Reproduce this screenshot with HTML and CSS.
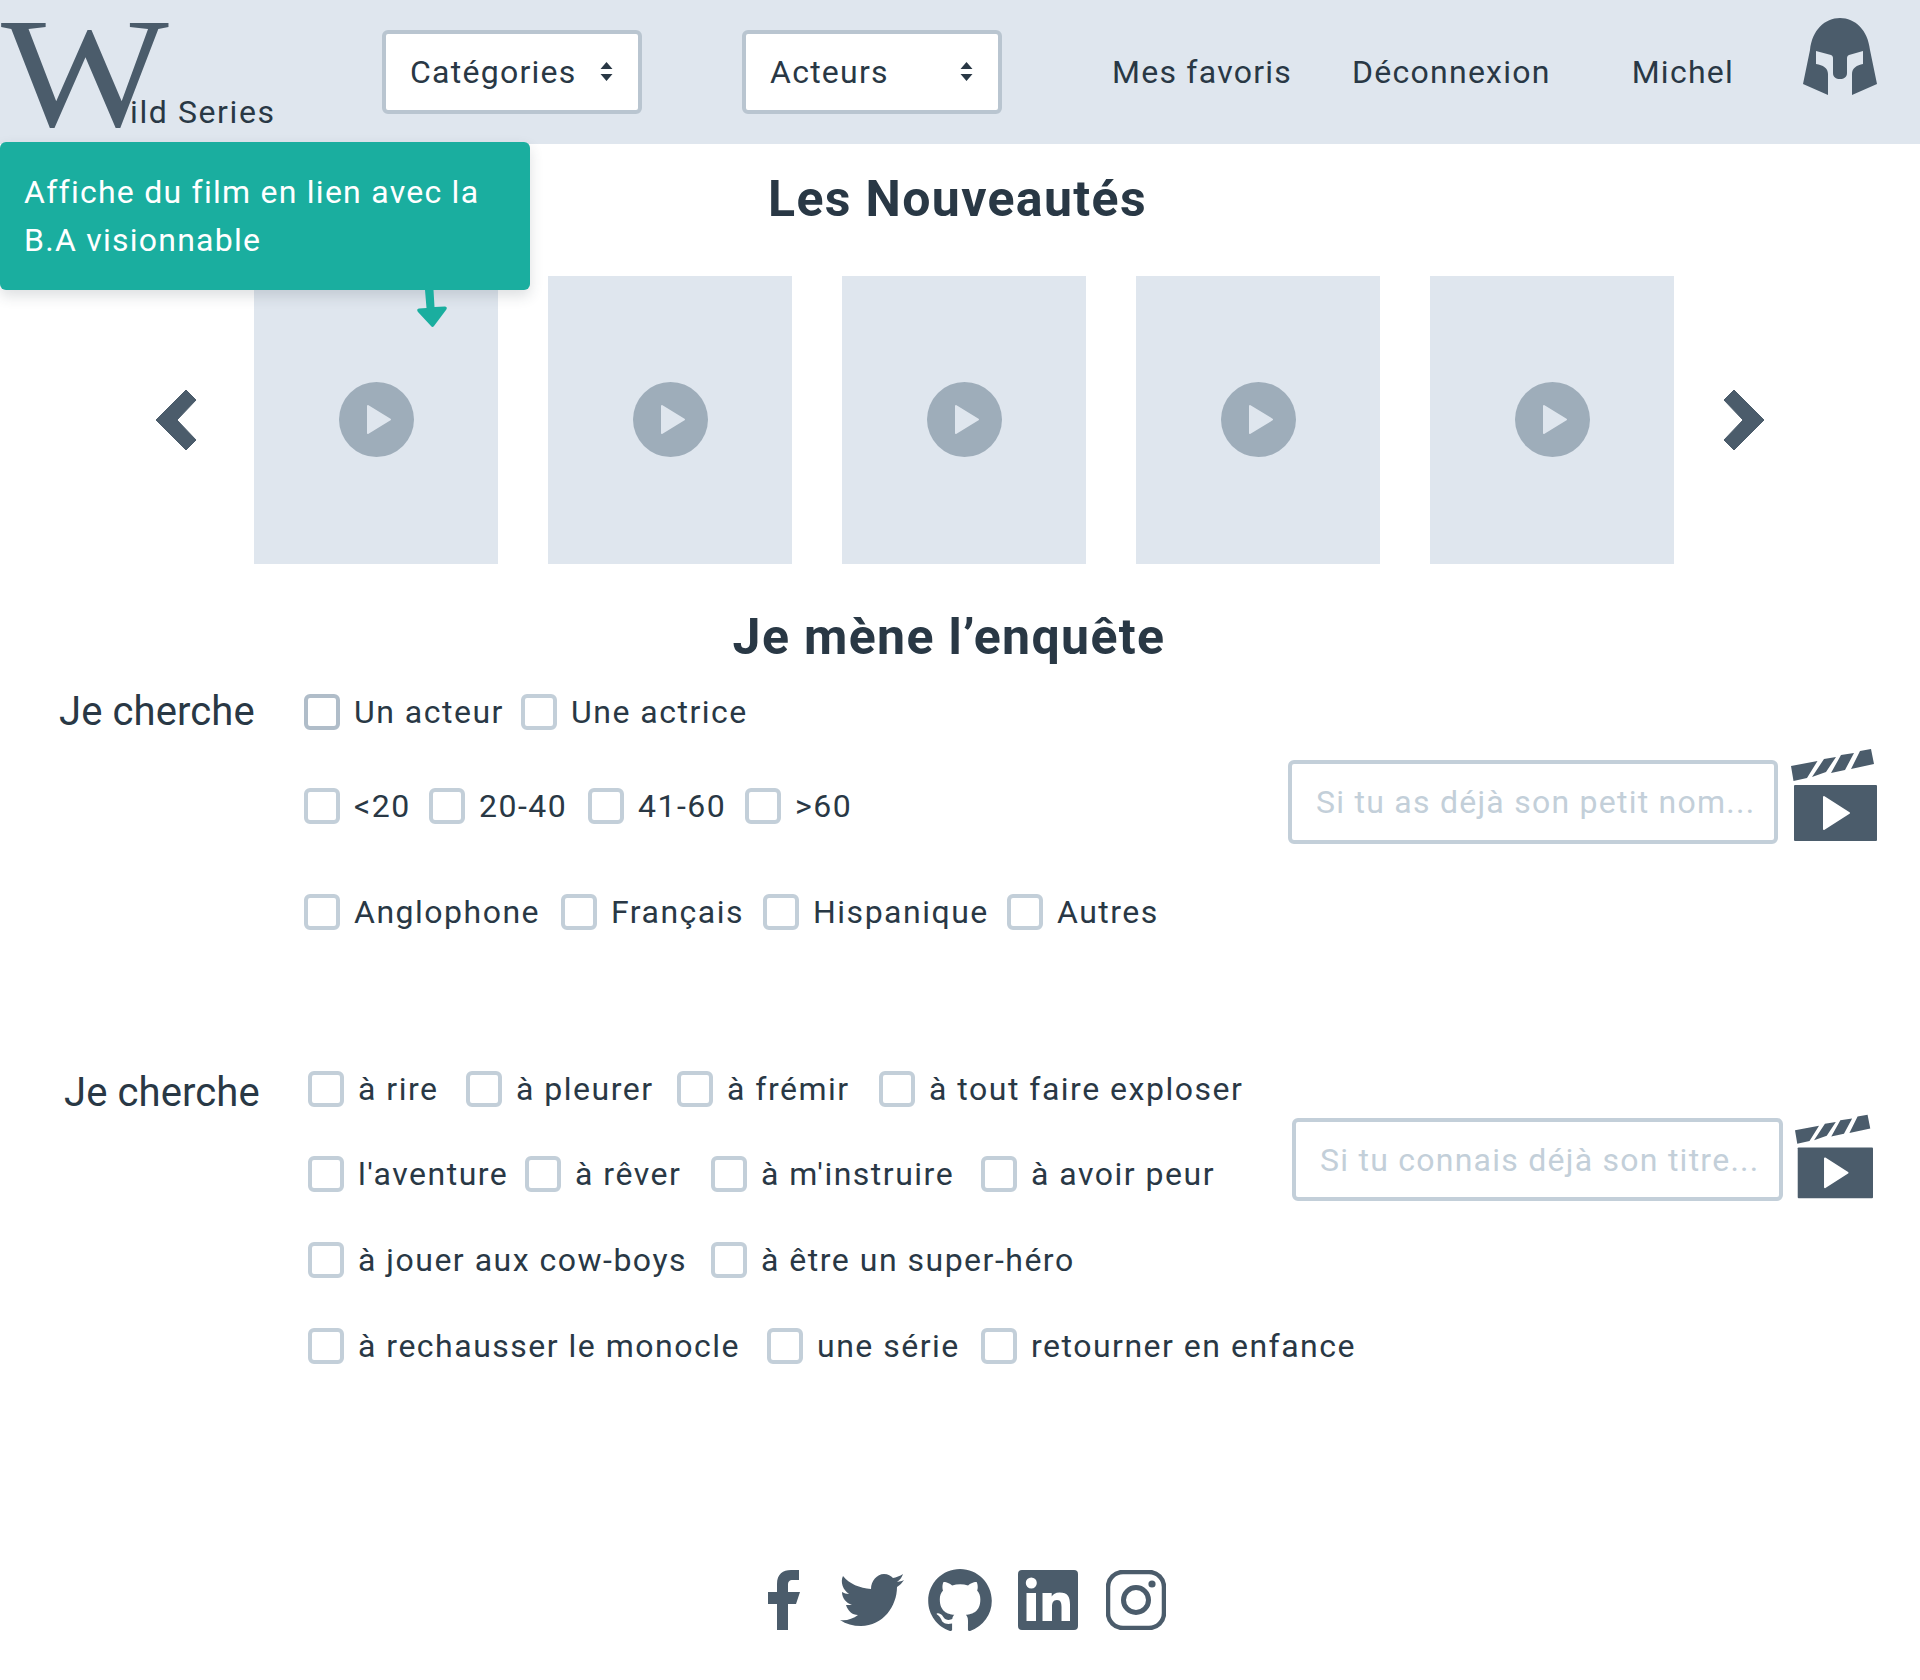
FILE: index.html
```html
<!doctype html>
<html lang="fr">
<head>
<meta charset="utf-8">
<title>Wild Series</title>
<link rel="stylesheet" href="styles.css">
</head>
<body>

<header class="topbar">
  <a class="logo" href="#"><span class="logo-w">W</span><span class="logo-text">ild Series</span></a>
  <button class="picker picker-first" type="button">Catégories
    <svg class="picker-arrows" viewBox="0 0 12 19"><path d="M6 0l6 7H0zM6 19L0 12h12z"/></svg>
  </button>
  <button class="picker picker-second" type="button">Acteurs
    <svg class="picker-arrows" viewBox="0 0 12 19"><path d="M6 0l6 7H0zM6 19L0 12h12z"/></svg>
  </button>
  <a class="navlink nav-fav" href="#">Mes favoris</a>
  <a class="navlink nav-out" href="#">Déconnexion</a>
  <a class="navlink nav-user" href="#">Michel</a>
  <svg class="helmet" viewBox="0 0 74 77"><path d="M37 0C52 0 65 12 67 32L74 66 49 77V56C49 50 54 47 60 46V33L46 37C44 38 44 39 44 41V55C44 59 41 61 37 61 33 61 30 59 30 55V41C30 39 30 38 28 37L13 33V46C20 47 25 50 25 56V77L0 66 7 32C9 12 22 0 37 0Z"/></svg>
</header>

<div class="tooltip">
  Affiche du film en lien avec la<br>B.A visionnable
  <svg class="tooltip-arrow" viewBox="0 0 30 38"><path d="M8 0H16.500L17.500 17 28 16.500Q31 17 29 20L17 36Q15.500 38 14 36L1 22Q-1 19 2 18.500L9.500 18Z"/></svg>
</div>

<main>
  <h1 class="title title-news">Les Nouveautés</h1>

  <section class="carousel">
    <svg class="chevron" viewBox="0 0 42 62"><path d="M31 1L41 11 22 31 41 51 31 61 1 31Z"/></svg>
    <div class="poster"><svg class="play" viewBox="0 0 75 75"><circle cx="37.500" cy="37.500" r="37.500"/><path class="play-tri" d="M29 24L51 37.500 29 51Z"/></svg></div>
    <div class="poster"><svg class="play" viewBox="0 0 75 75"><circle cx="37.500" cy="37.500" r="37.500"/><path class="play-tri" d="M29 24L51 37.500 29 51Z"/></svg></div>
    <div class="poster"><svg class="play" viewBox="0 0 75 75"><circle cx="37.500" cy="37.500" r="37.500"/><path class="play-tri" d="M29 24L51 37.500 29 51Z"/></svg></div>
    <div class="poster"><svg class="play" viewBox="0 0 75 75"><circle cx="37.500" cy="37.500" r="37.500"/><path class="play-tri" d="M29 24L51 37.500 29 51Z"/></svg></div>
    <div class="poster"><svg class="play" viewBox="0 0 75 75"><circle cx="37.500" cy="37.500" r="37.500"/><path class="play-tri" d="M29 24L51 37.500 29 51Z"/></svg></div>
    <svg class="chevron chevron-right" viewBox="0 0 42 62"><path d="M31 1L41 11 22 31 41 51 31 61 1 31Z"/></svg>
  </section>

  <h2 class="title title-quest">Je mène l’enquête</h2>

  <section class="filter filter-people">
    <div class="filter-label">Je cherche</div>
    <div class="filter-rows">
      <div class="row row-who">
        <label class="opt"><input class="hovered" type="checkbox">Un acteur</label>
        <label class="opt"><input type="checkbox">Une actrice</label>
      </div>
      <div class="row row-age">
        <label class="opt"><input type="checkbox">&lt;20</label>
        <label class="opt"><input type="checkbox">20-40</label>
        <label class="opt"><input type="checkbox">41-60</label>
        <label class="opt"><input type="checkbox">&gt;60</label>
      </div>
      <div class="row row-lang">
        <label class="opt"><input type="checkbox">Anglophone</label>
        <label class="opt"><input type="checkbox">Français</label>
        <label class="opt"><input type="checkbox">Hispanique</label>
        <label class="opt"><input type="checkbox">Autres</label>
      </div>
    </div>
    <div class="search">
      <input class="search-input" type="text" placeholder="Si tu as déjà son petit nom...">
      <svg class="clapper" viewBox="0 0 86 92">
        <path d="M0 17L26.500 12 16 29 2.500 32ZM33 10L45 8 35 23 21 28ZM50 6L63 4 54 21 40 24ZM69 2L80 0 83 15 60 20Z"/>
        <rect x="3" y="36" width="83" height="56" rx="1"/>
        <path class="clapper-tri" d="M33 48L58 64 33 80Z"/>
      </svg>
    </div>
  </section>

  <section class="filter filter-mood">
    <div class="filter-label">Je cherche</div>
    <div class="filter-rows">
      <div class="row row-mood-a">
        <label class="opt"><input type="checkbox">à rire</label>
        <label class="opt"><input type="checkbox">à pleurer</label>
        <label class="opt"><input type="checkbox">à frémir</label>
        <label class="opt"><input type="checkbox">à tout faire exploser</label>
      </div>
      <div class="row row-mood-b">
        <label class="opt"><input type="checkbox">l'aventure</label>
        <label class="opt"><input type="checkbox">à rêver</label>
        <label class="opt"><input type="checkbox">à m'instruire</label>
        <label class="opt"><input type="checkbox">à avoir peur</label>
      </div>
      <div class="row row-mood-c">
        <label class="opt"><input type="checkbox">à jouer aux cow-boys</label>
        <label class="opt"><input type="checkbox">à être un super-héro</label>
      </div>
      <div class="row row-mood-d">
        <label class="opt"><input type="checkbox">à rechausser le monocle</label>
        <label class="opt"><input type="checkbox">une série</label>
        <label class="opt"><input type="checkbox">retourner en enfance</label>
      </div>
    </div>
    <div class="search">
      <input class="search-input" type="text" placeholder="Si tu connais déjà son titre...">
      <svg class="clapper" viewBox="0 0 86 92">
        <path d="M0 17L26.500 12 16 29 2.500 32ZM33 10L45 8 35 23 21 28ZM50 6L63 4 54 21 40 24ZM69 2L80 0 83 15 60 20Z"/>
        <rect x="3" y="36" width="83" height="56" rx="1"/>
        <path class="clapper-tri" d="M33 48L58 64 33 80Z"/>
      </svg>
    </div>
  </section>
</main>

<footer class="socials">
  <svg class="social social-f" width="32" height="60" viewBox="0 0 32 60"><path d="M9 60V34H0V22H9V14C9 4 15 0 23 0H31V10H25C21 10 20 12 20 15V22H32L28 34H20V60Z"/></svg>
  <svg class="social" width="64" height="52" viewBox="0 0 64 52"><path d="M3 2C9 10 20 14 31 15 31 7 37 0 44 0 48 0 51 2 53 4 56 3.500 60 2 63 0 62 3 60 6 57 8 60 7.500 62 7 64 6 62 9 60 11 57 13 57 32 43 52 21 52 13 52 6 50 0 46 6 47 13 45 18 41 12 41 8 37 6 31H12C6 29 2 24 2 18 4 19 6 20 9 20 3 16 0 8 3 2Z"/></svg>
  <svg class="social" width="64" height="62" viewBox="0 0 16 15.600"><path d="M8 0C3.580 0 0 3.580 0 8c0 3.540 2.290 6.530 5.470 7.590.4.070.55-.17.55-.38 0-.19-.01-.82-.01-1.490-2.010.37-2.530-.49-2.690-.94-.09-.23-.48-.94-.82-1.130-.28-.15-.68-.52-.01-.53.63-.01 1.080.58 1.230.82.72 1.210 1.870.87 2.330.66.07-.52.28-.87.51-1.070-1.780-.2-3.640-.89-3.640-3.950 0-.87.31-1.590.82-2.150-.08-.2-.36-1.020.08-2.120 0 0 .67-.21 2.200.82.64-.18 1.320-.27 2-.27.68 0 1.360.09 2 .27 1.530-1.040 2.200-.82 2.200-.82.44 1.100.16 1.920.08 2.120.51.56.82 1.270.82 2.150 0 3.070-1.870 3.750-3.650 3.950.29.25.54.73.54 1.480 0 1.070-.01 1.930-.01 2.200 0 .21.15.46.55.38A8.013 8.013 0 0 0 16 8c0-4.420-3.580-8-8-8z"/></svg>
  <svg class="social social-in" width="60" height="60" viewBox="0 0 60 60">
    <path fill-rule="evenodd" d="M4 0H56A4 4 0 0 1 60 4V56A4 4 0 0 1 56 60H4A4 4 0 0 1 0 56V4A4 4 0 0 1 4 0ZM8.500 23V51H18V23ZM13.300 7.500A5.500 5.500 0 1 0 13.300 18.500 5.500 5.500 0 0 0 13.300 7.500ZM24.500 23V51H34V37C34 33 35 30 39 30 43 30 43.500 33.500 43.500 37V51H52V35C52 27 50 22.500 41.500 22.500 37.500 22.500 35 24.500 33.700 26.500V23Z"/>
  </svg>
  <svg class="social" width="60" height="60" viewBox="0 0 60 60">
    <rect class="ig-line" x="2" y="2" width="56" height="56" rx="15"/>
    <circle class="ig-line ig-lens" cx="30" cy="30" r="12.500"/>
    <circle cx="46" cy="14" r="3.600"/>
  </svg>
</footer>

</body>
</html>
```

FILE: styles.css
```css
* {
  box-sizing: border-box;
}

body {
  margin: 0;
  color: #293845;
  background-color: #ffffff;
  font-family: Roboto, "Liberation Sans", sans-serif;
  font-size: 32px;
  letter-spacing: 1.25px;
  position: relative;
}

a {
  color: inherit;
  text-decoration: none;
}

/* top bar */

.topbar {
  display: flex;
  align-items: center;
  height: 144px;
  background-color: #dfe6ee;
}

.logo {
  display: block;
  position: relative;
  flex: none;
  width: 382px;
  height: 144px;
}

.logo-w {
  position: absolute;
  left: 1px;
  top: 1px;
  font-family: "Liberation Serif", serif;
  font-size: 156px;
  line-height: 146px;
  letter-spacing: 0;
  color: #4b5c6b;
  transform: scaleX(1.14);
  transform-origin: left top;
}

.logo-text {
  position: absolute;
  left: 130px;
  top: 93px;
  line-height: 38px;
  letter-spacing: 1.6px;
}

.picker {
  display: flex;
  align-items: center;
  justify-content: space-between;
  flex: none;
  width: 260px;
  height: 84px;
  padding: 0 25px 0 24px;
  margin-top: -1px;
  border: 4px solid #b9c5d0;
  border-radius: 6px;
  background-color: #ffffff;
  color: inherit;
  font: inherit;
  letter-spacing: inherit;
}

.picker-second {
  margin-left: 100px;
}

.picker-arrows {
  width: 13px;
  height: 19px;
  fill: #293845;
}

.navlink {
  flex: none;
  margin-top: -1px;
}

.nav-fav {
  margin-left: 110px;
}

.nav-out {
  margin-left: 60px;
}

.nav-user {
  margin-left: 81px;
}

.helmet {
  flex: none;
  width: 74px;
  height: 77px;
  margin-left: 69px;
  margin-top: -31px;
  fill: #4b5c6b;
}

/* tooltip over the first poster */

.tooltip {
  position: absolute;
  left: 0;
  top: 142px;
  width: 530px;
  height: 148px;
  padding: 26px 24px;
  border-radius: 6px;
  background-color: #1aae9f;
  color: #ffffff;
  line-height: 48px;
  box-shadow: 0 6px 14px rgba(41, 56, 69, 0.16);
  z-index: 2;
}

.tooltip-arrow {
  position: absolute;
  left: 417px;
  top: 148px;
  width: 30px;
  height: 38px;
  fill: #1aae9f;
}

/* titles */

.title {
  margin: 0;
  font-size: 50px;
  font-weight: 700;
  line-height: 56px;
  text-align: center;
  letter-spacing: 1.35px;
}

.title-news {
  margin-top: 27px;
  padding-right: 5px;
}

.title-quest {
  margin-top: 45px;
  padding-right: 22px;
}

/* carousel */

.carousel {
  display: flex;
  align-items: center;
  gap: 50px;
  height: 288px;
  margin-top: 49px;
  padding-left: 155px;
}

.chevron {
  flex: none;
  width: 42px;
  height: 62px;
  margin-right: 7px;
  fill: #4b5c6b;
  stroke: #4b5c6b;
  stroke-width: 1;
  stroke-linejoin: round;
}

.chevron-right {
  margin-left: -1px;
  margin-right: 0;
  transform: scaleX(-1);
}

.poster {
  display: flex;
  align-items: center;
  justify-content: center;
  flex: none;
  width: 244px;
  height: 288px;
  background-color: #dfe6ee;
}

.play {
  width: 75px;
  height: 75px;
  margin-top: -1px;
  fill: #9eadba;
}

.play-tri {
  fill: #dfe6ee;
  stroke: #dfe6ee;
  stroke-width: 2;
  stroke-linejoin: round;
}

/* filters */

.filter {
  display: flex;
  align-items: flex-start;
}

.filter-people {
  margin-top: 19px;
  padding-left: 59px;
}

.filter-mood {
  margin-top: 121px;
  padding-left: 64px;
}

.filter-label {
  flex: none;
  width: 245px;
  font-size: 40px;
  line-height: 56px;
  letter-spacing: 0.1px;
}

.filter-mood .filter-label {
  width: 244px;
  margin-top: 4px;
}

.filter-rows {
  flex: none;
  width: 984px;
}

.row {
  display: grid;
  align-items: center;
  height: 56px;
  letter-spacing: 1.5px;
}

.row-who { grid-template-columns: 217px auto; justify-content: start; }
.row-age { grid-template-columns: 125px 159px 157px auto; justify-content: start; margin-top: 38px; }
.row-lang { grid-template-columns: 257px 202px 244px auto; justify-content: start; margin-top: 50px; }
.row-mood-a { grid-template-columns: 158px 211px 202px auto; justify-content: start; }
.row-mood-b { grid-template-columns: 217px 186px 270px auto; justify-content: start; margin-top: 29px; }
.row-mood-c { grid-template-columns: 403px auto; justify-content: start; margin-top: 30px; }
.row-mood-d { grid-template-columns: 459px 214px auto; justify-content: start; margin-top: 30px; }

.opt {
  display: flex;
  align-items: center;
  gap: 14px;
  white-space: nowrap;
}

.opt input {
  appearance: none;
  flex: none;
  width: 36px;
  height: 36px;
  margin: 0;
  border: 4px solid #c3cfd9;
  border-radius: 6px;
  background-color: #ffffff;
}

.opt input.hovered {
  border-color: #b0bdc9;
}

/* search box with its clapper */

.search {
  display: flex;
  flex: none;
  align-items: flex-start;
  gap: 13px;
  margin-top: 76px;
}

.search-input {
  width: 490px;
  height: 84px;
  padding: 0 0 0 24px;
  border: 4px solid #c3cfd9;
  border-radius: 6px;
  color: inherit;
  font: inherit;
  letter-spacing: inherit;
}

.search-input::placeholder {
  color: #c3cfd9;
  opacity: 1;
}

.clapper {
  width: 86px;
  height: 92px;
  margin-top: -11px;
  fill: #4b5c6b;
}

.clapper-tri {
  fill: #ffffff;
  stroke: #ffffff;
  stroke-width: 2;
  stroke-linejoin: round;
}

.filter-mood .search {
  gap: 12px;
  margin-top: 57px;
}

.filter-mood .search-input {
  width: 491px;
  height: 83px;
}

.filter-mood .clapper {
  width: 78px;
  height: 85px;
  margin-top: -4px;
}

/* footer icons */

.socials {
  display: flex;
  align-items: center;
  gap: 24px;
  margin-top: 195px;
  padding-left: 768px;
  padding-bottom: 50px;
}

.social {
  flex: none;
  fill: #4b5c6b;
}

.social-f {
  margin-right: 16px;
}

.social-in {
  margin-left: 2px;
  margin-right: 4px;
}

.ig-line {
  fill: none;
  stroke: #4b5c6b;
  stroke-width: 4.500;
}

.ig-lens {
  stroke-width: 5;
}
```
